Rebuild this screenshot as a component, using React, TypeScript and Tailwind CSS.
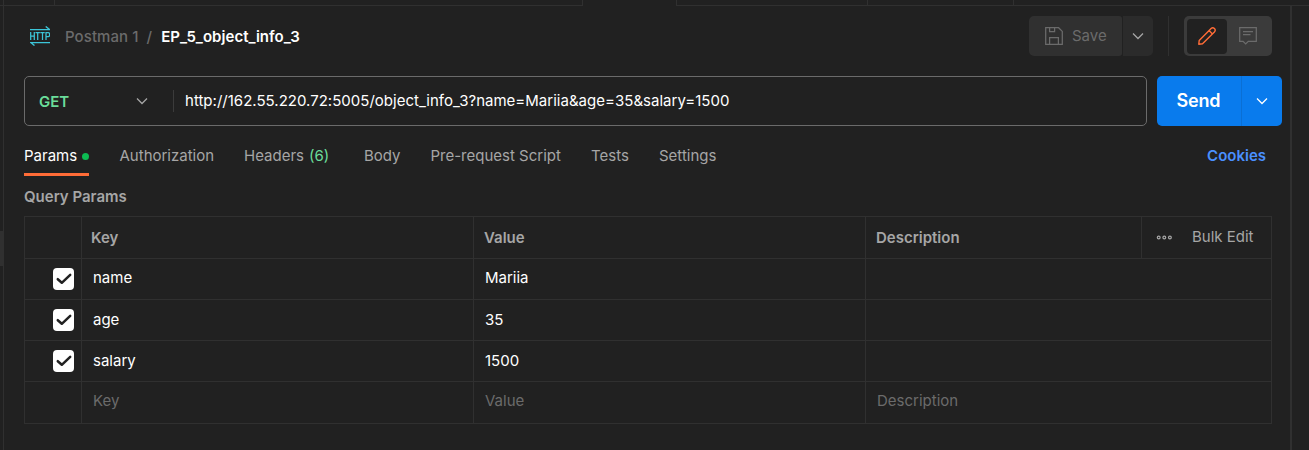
import React from "react";

const Chevron = ({ color }: { color: string }) => (
  <svg width="12" height="8" viewBox="0 0 12 8" fill="none" className="shrink-0">
    <path d="M1 1.5 6 6.5 11 1.5" stroke={color} strokeWidth="1.25" />
  </svg>
);

const HttpIcon = () => (
  <svg width="20" height="20" viewBox="0 0 20 20" fill="none" stroke="#3cc5d8" strokeWidth="1.25" className="shrink-0">
    <path d="M0 3.5H19.5L15.7.4M20 16.5H.7L4.5 19.6" />
    <path d="M.7 6v8M4.3 6v8M.7 10h3.6M5.5 6.6h4.4M7.7 6.6V14M10.3 6.6h4.4M12.5 6.6V14M16 14V6.6h2.2a1.4 1.4 0 0 1 1.4 1.4v1.2a1.4 1.4 0 0 1-1.4 1.4H16" />
  </svg>
);

const SaveIcon = () => (
  <svg width="18" height="18" viewBox="0 0 18 18" fill="none" stroke="#6b6b6b" strokeWidth="1.25" className="shrink-0">
    <path d="M.7.7H13.6L17.3 4.4V17.3H.7ZM4.6.7V4.6H9.6V.7M4.6 17.3V10.7H13.4V17.3" />
  </svg>
);

const PencilIcon = () => (
  <svg width="18" height="18" viewBox="0 0 18 18" fill="none" stroke="#ff6c37" strokeWidth="1.4" strokeLinejoin="round">
    <path d="M.8 17.2 1.2 13.5 13.1 1.6a2.3 2.3 0 0 1 3.3 3.3L4.5 16.8ZM11.1 3.6l3.3 3.3" />
  </svg>
);

const CommentIcon = () => (
  <svg width="18" height="18" viewBox="0 0 18 18" fill="none" stroke="#6b6b6b" strokeWidth="1.25">
    <path d="M.7.7H17.3V14.3H9.3L6.7 16.9 4.1 14.3H.7ZM4 4.6H14M4 7.6H11.5" />
  </svg>
);

const Checkbox = () => (
  <span className="flex h-[22px] w-[21px] items-center justify-center rounded-[4px] bg-white">
    <svg width="16" height="12" viewBox="0 0 16 12" fill="none">
      <path d="M1.8 6.2 5.8 9.8 14.2 1.8" stroke="#212121" strokeWidth="2.5" strokeLinecap="round" strokeLinejoin="round" />
    </svg>
  </span>
);

const tabs = [
  { label: "Authorization", width: "w-[124.5px]" },
  { label: "Headers", count: "(6)", width: "w-[120px]" },
  { label: "Body", width: "w-[66.5px]" },
  { label: "Pre-request Script", width: "w-[160.5px]" },
  { label: "Tests", width: "w-[68px]" },
  { label: "Settings", width: "w-[80px]" },
];

const rows = [
  { name: "name", value: "Mariia", pad: "pb-0.5" },
  { name: "age", value: "35", pad: "" },
  { name: "salary", value: "1500", pad: "" },
];

const cell = "flex items-center border-l border-[#303030]";

export default function App() {
  return (
    <div className="flex h-[450px] w-[1309px] overflow-hidden whitespace-nowrap bg-[#212121] font-['Inter',sans-serif] text-[15px] leading-5 text-[#a6a6a6]">
      <div className="flex w-1 shrink-0 flex-col border-r border-[#303030]">
        <div className="h-1.5 border-b border-[#303030]" />
        <div className="mt-[225px] h-[35px] bg-[#303030]" />
      </div>

      <div className="flex w-[1305px] flex-col">
        <div className="flex h-1.5 shrink-0">
          <div className="w-[51px] border-r border-b border-[#303030]" />
          <div className="w-[528px] border-r border-b border-[#303030]" />
          <div className="w-[93px]" />
          <div className="w-[191px] border-b border-l border-[#303030]" />
          <div className="w-[146px] border-b border-l border-[#303030]" />
          <div className="flex-1 border-b border-l border-[#303030]" />
        </div>

        <div className="flex flex-1">
          <main className="w-[1286px] shrink-0 pl-5">
            <header className="flex h-[70px] pt-[10px]">
              <div className="flex h-10 flex-1 items-center pl-1.5">
                <HttpIcon />
                <span className="ml-[15px] pt-0.5 font-medium tracking-[0.08px] text-[#6b6b6b]">Postman 1</span>
                <span className="ml-2 pt-0.5 font-medium text-[#6b6b6b]">/</span>
                <span className="ml-[9px] pt-0.5 font-semibold tracking-[0.04px] text-white">EP_5_object_info_3</span>
              </div>
              <button className="flex h-10 w-[93px] items-center rounded-l-[5px] rounded-r-[3px] bg-[#303030] pl-4 text-[#6b6b6b]">
                <SaveIcon />
                <span className="ml-[9px]">Save</span>
              </button>
              <button className="ml-px flex h-10 w-[30px] items-center justify-center rounded-r-[5px] bg-[#2b2b2b]">
                <Chevron color="#a6a6a6" />
              </button>
              <div className="ml-[15px] h-10 w-px bg-[#303030]" />
              <div className="mr-[18px] ml-[15px] flex h-10 w-[88px] items-center rounded-[5px] bg-[#3b3b3b] pl-[3px]">
                <div className="flex h-[35px] w-10 items-center justify-center rounded-[4px] bg-[#212121]">
                  <PencilIcon />
                </div>
                <div className="flex w-[42px] justify-center">
                  <CommentIcon />
                </div>
              </div>
            </header>

            <div className="flex h-[50px]">
              <div className="flex w-[1123px] items-center rounded-[5px] border border-[#6b6b6b] pl-3.5">
                <span className="w-[97px] pt-0.5 font-semibold text-[#6bdd9a]">GET</span>
                <Chevron color="#a6a6a6" />
                <div className="ml-[25px] h-[22px] w-px bg-[#3b3b3b]" />
                <span className="ml-[11px] tracking-[0.015px] text-white">
                  http://162.55.220.72:5005/object_info_3?name=Mariia&amp;age=35&amp;salary=1500
                </span>
              </div>
              <button className="ml-2.5 flex h-[50px] w-[84px] items-center justify-center rounded-l-[5px] bg-[#097bed] pr-px text-[18px] font-semibold tracking-[-0.2px] text-white">
                Send
              </button>
              <button className="flex h-[50px] w-[41px] items-center justify-center rounded-r-[5px] border-l border-[#0a6fd4] bg-[#097bed]">
                <Chevron color="#ffffff" />
              </button>
            </div>

            <nav className="flex h-[50px] items-start">
              <div className="mr-[30.5px] flex h-[50px] w-[65px] items-center border-b-[3px] border-[#ff6c37] pt-[13px] text-white">
                Params
                <span className="ml-[5px] h-[7px] w-[7px] shrink-0 rounded-full bg-[#0cbb52]" />
              </div>
              {tabs.map((t) => (
                <div key={t.label} className={`${t.width} shrink-0 pt-5`}>
                  {t.label}
                  {t.count && <span className="ml-[5px] text-[#6bdd9a]">{t.count}</span>}
                </div>
              ))}
              <span className="mt-5 mr-6 ml-auto font-semibold text-[#4a90ff]">Cookies</span>
            </nav>

            <h2 className="flex h-10 items-center pt-0.5 font-semibold">Query Params</h2>

            <section className="w-[1248px] border-t border-r border-b border-[#303030]">
              <div className="flex h-[42px] border-b border-[#303030] font-semibold">
                <div className={`${cell} w-[57px]`} />
                <div className={`${cell} w-[392px] pl-[9px]`}>Key</div>
                <div className={`${cell} w-[392px] pl-2.5`}>Value</div>
                <div className={`${cell} w-[276px] pl-2.5`}>Description</div>
                <div className={`${cell} flex-1 pl-3.5 font-normal`}>
                  <svg width="16" height="6" viewBox="0 0 16 6" fill="none" stroke="#a6a6a6" strokeWidth="1.2">
                    <circle cx="2.7" cy="2.5" r="1.4" />
                    <circle cx="8.3" cy="2.5" r="1.4" />
                    <circle cx="13.9" cy="2.5" r="1.4" />
                  </svg>
                  <span className="ml-5 pb-0.5">Bulk Edit</span>
                </div>
              </div>
              {rows.map((r) => (
                <div key={r.name} className="flex h-[41px] border-b border-[#303030] text-white">
                  <div className={`${cell} w-[57px] pl-7`}>
                    <Checkbox />
                  </div>
                  <div className={`${cell} ${r.pad} w-[392px] pl-[11px]`}>{r.name}</div>
                  <div className={`${cell} ${r.pad} w-[392px] pl-[11px]`}>{r.value}</div>
                  <div className={`${cell} flex-1`} />
                </div>
              ))}
              <div className="flex h-[41px] text-[#6b6b6b]">
                <div className={`${cell} w-[57px]`} />
                <div className={`${cell} w-[392px] pb-1 pl-[11px]`}>Key</div>
                <div className={`${cell} w-[392px] pb-1 pl-[11px]`}>Value</div>
                <div className={`${cell} flex-1 pb-1 pl-[11px]`}>Description</div>
              </div>
            </section>
          </main>
          <div className="w-0.5 bg-[#303030]" />
        </div>
      </div>
    </div>
  );
}
